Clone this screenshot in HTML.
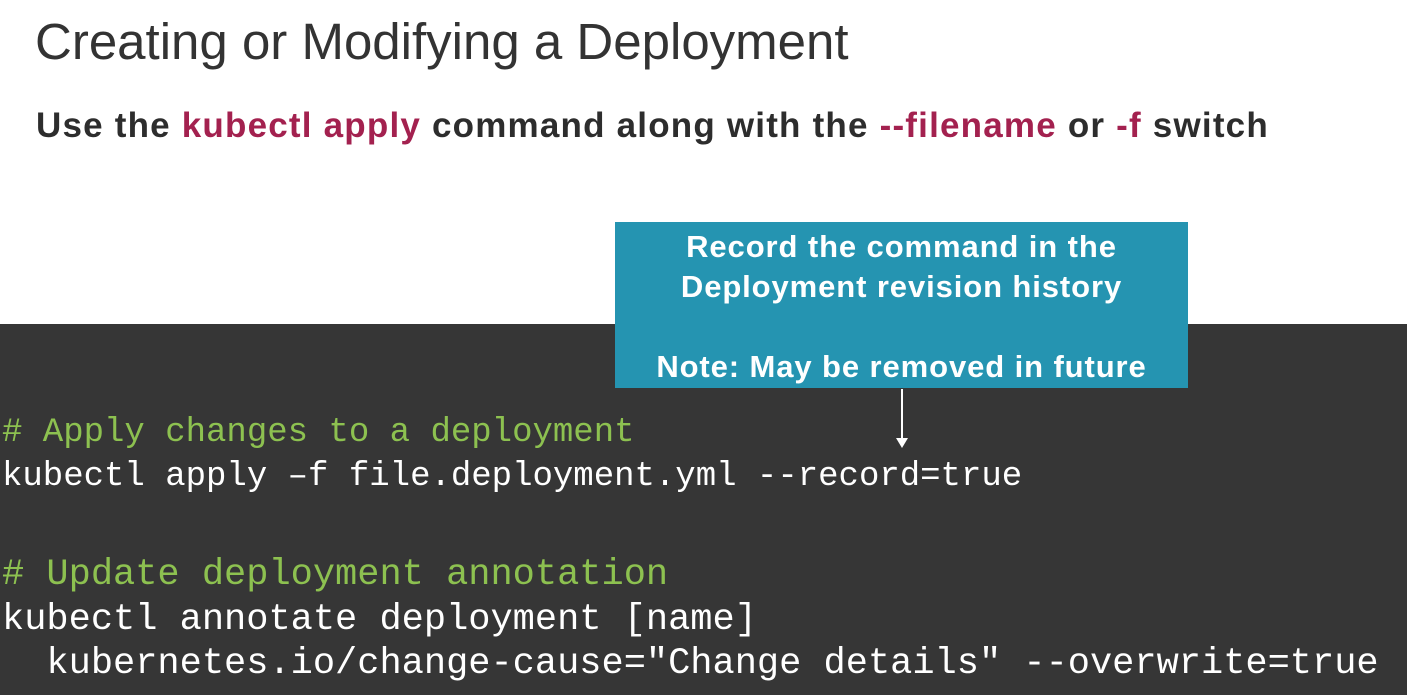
<!DOCTYPE html>
<html><head><style>
body{margin:0;width:1407px;height:695px;overflow:hidden;background:#fff;position:relative;font-family:"Liberation Sans",sans-serif}
.t{position:absolute;left:35px;top:12px;font-size:51px;color:#333;white-space:nowrap}
.s{position:absolute;left:36px;top:106px;font-size:35px;font-weight:bold;color:#2d2d2d;white-space:nowrap;letter-spacing:1.2px}
.s b{color:#a3214f}
.dark{position:absolute;left:0;top:324px;width:1407px;height:371px;background:#363636}
.box{position:absolute;left:615px;top:222px;width:573px;height:166px;background:#2594b1;color:#fff;font-weight:bold;font-size:31px;text-align:center;line-height:40px;padding-top:5px;box-sizing:border-box;letter-spacing:0.9px}
.arr{position:absolute;left:901px;top:389px;width:2px;height:52px;background:#fff}
.ah{position:absolute;left:896px;top:438px;width:0;height:0;border-left:6px solid transparent;border-right:6px solid transparent;border-top:10px solid #fff}
pre{position:absolute;left:2px;margin:0;font-family:"Liberation Mono","DejaVu Sans Mono",monospace;color:#fff}
.p1{top:411px;font-size:34px;line-height:44px}
.p2{top:553px;font-size:37px;line-height:44.5px}
.c{color:#8dc150}
</style></head><body>
<div class="t">Creating or Modifying a Deployment</div>
<div class="s">Use the <b>kubectl apply</b> command along with the <b>--filename</b> or <b>-f</b> switch</div>
<div class="dark"></div>
<div class="box">Record the command in the<br>Deployment revision history<br><br>Note: May be removed in future</div>
<div class="arr"></div><div class="ah"></div>
<pre class="p1"><span class="c"># Apply changes to a deployment</span>
kubectl apply –f file.deployment.yml --record=true</pre>
<pre class="p2"><span class="c"># Update deployment annotation</span>
kubectl annotate deployment [name]
  kubernetes.io/change-cause="Change details" --overwrite=true</pre>
</body></html>
